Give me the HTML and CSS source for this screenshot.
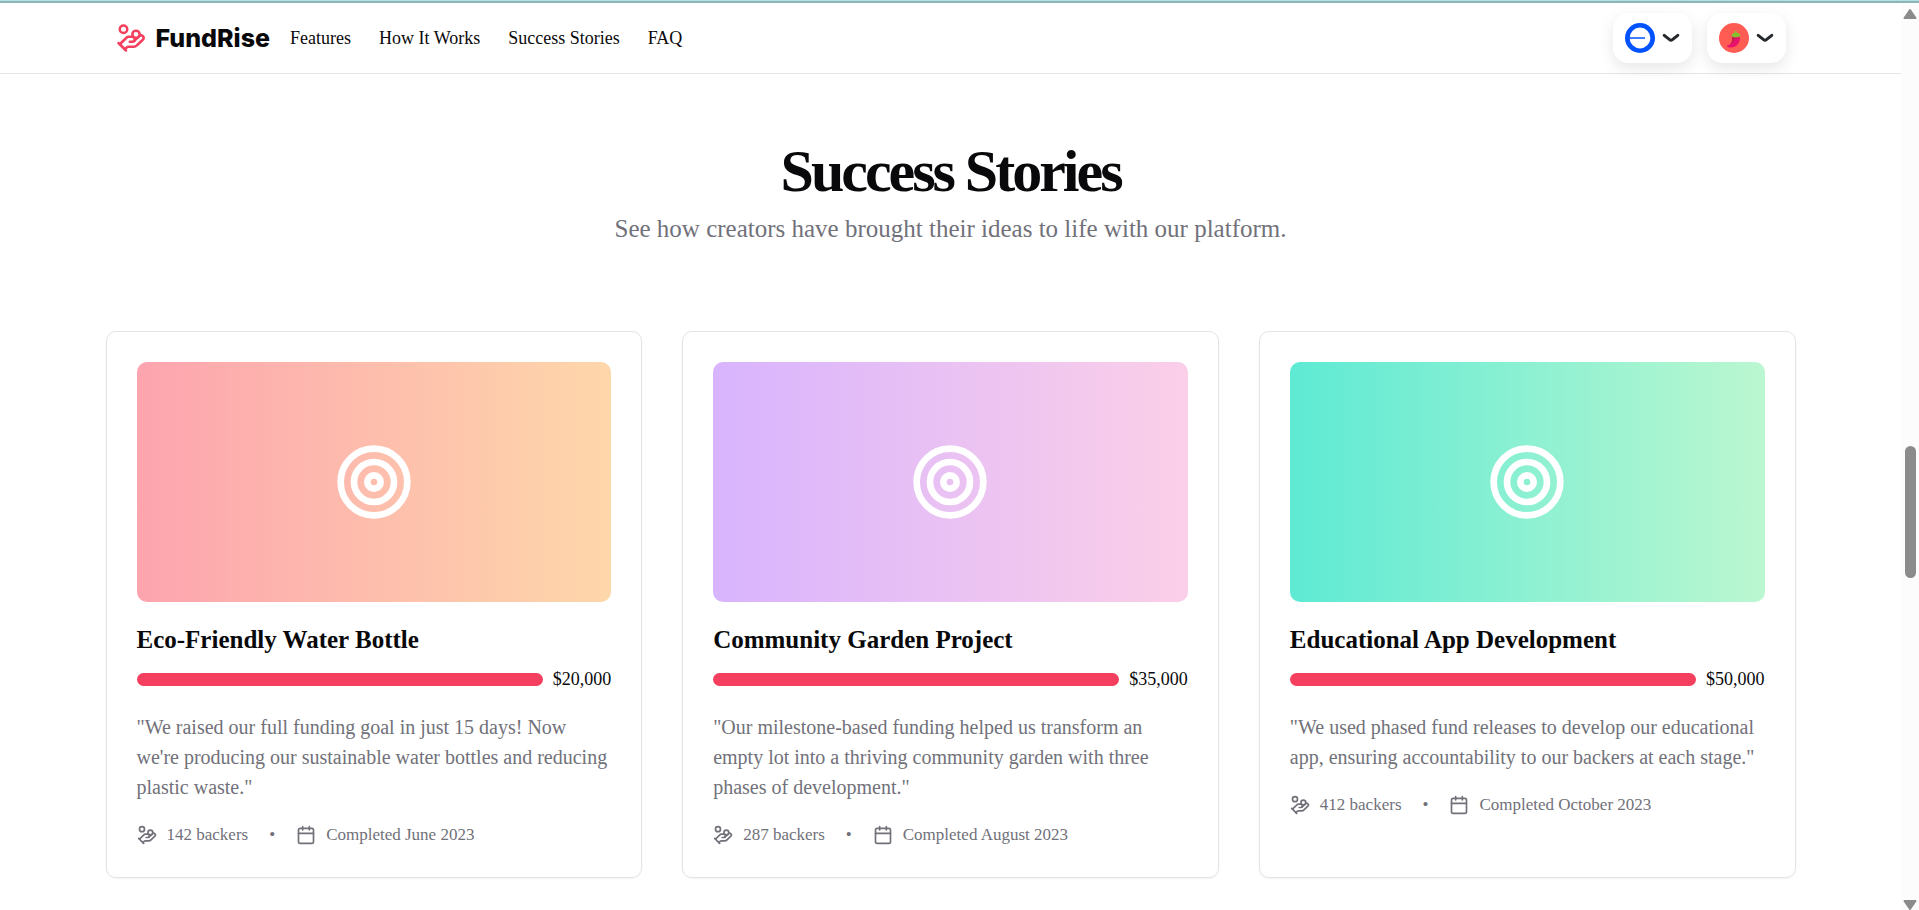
FILE: index.html
```html
<!DOCTYPE html>
<html lang="en">
<head>
<meta charset="utf-8">
<meta name="viewport" content="width=device-width, initial-scale=1">
<title>FundRise</title>
<link rel="stylesheet" href="styles.css">
</head>
<body>
<svg class="sprite" aria-hidden="true">
  <symbol id="hand-coins" viewBox="0 0 24 24">
    <path d="M11 15h2a2 2 0 1 0 0-4h-3c-.6 0-1.1.2-1.4.6L3 17"/>
    <path d="m7 21 1.6-1.4c.3-.4.8-.6 1.4-.6h4c1.1 0 2.1-.4 2.8-1.2l4.6-4.4a2 2 0 0 0-2.75-2.91l-4.2 3.9"/>
    <path d="m2 16 6 6"/>
    <circle cx="16" cy="9" r="2.9"/>
    <circle cx="6" cy="5" r="3"/>
  </symbol>
  <symbol id="calendar" viewBox="0 0 24 24">
    <path d="M8 2v4M16 2v4M3 10h18"/>
    <rect x="3" y="4" width="18" height="18" rx="2"/>
  </symbol>
  <symbol id="target" viewBox="0 0 24 24">
    <circle cx="12" cy="12" r="10"/>
    <circle cx="12" cy="12" r="6"/>
    <circle cx="12" cy="12" r="2"/>
  </symbol>
  <symbol id="chevron" viewBox="0 0 18 18">
    <path d="M2.200 6.300 7.600 10.700a2.200 2.200 0 0 0 2.800 0L15.800 6.300"/>
  </symbol>
</svg>
<div class="topline"></div>
<div class="shell">
  <div class="page">
    <header class="header">
      <div class="header-inner">
        <a class="brand" href="#"><svg class="icon brand-icon"><use href="#hand-coins"/></svg><span>FundRise</span></a>
        <nav class="nav">
          <a href="#features">Features</a>
          <a href="#how">How It Works</a>
          <a href="#stories">Success Stories</a>
          <a href="#faq">FAQ</a>
        </nav>
        <div class="wallet">
          <button class="pill" type="button" aria-label="Choose network">
            <svg class="avatar" viewBox="0 0 30 30"><circle cx="15" cy="15" r="12.700" fill="#fff" stroke="#0052ff" stroke-width="4.600"/><path d="M4 15h16" stroke="#0052ff" stroke-width="1.500"/></svg>
            <svg class="chevron"><use href="#chevron"/></svg>
          </button>
          <button class="pill" type="button" aria-label="Account">
            <svg class="avatar" viewBox="0 0 30 30"><circle cx="15" cy="15" r="15" fill="#ff5c53"/><path d="M13 13.200h7.600c.8 3.600-.3 7-2.900 9.200-2.500 2-6 2.400-8.600 1.900-1.500-.3-1.300-2 .1-2.200 3-.6 3.900-2.600 3.800-5.200z" fill="#e8126c"/><path d="M13 13.200c1 2.700.9 5.500-2.300 8 2.800-.9 5-2.700 5.100-5.200v-2.800z" fill="#bf1f52"/><path d="M12.600 13c.1-2 1.600-3.200 3.500-3.300l-.6-1.500 1.700-.5.600 2c2 .2 3.500 1.500 3.500 3.400-1.200 1.300-2.300.4-3 1.400-.9-.8-1.800-.7-2.500.1-.9-.7-2.200-.2-3.200-1.600z" fill="#86c22c"/></svg>
            <svg class="chevron"><use href="#chevron"/></svg>
          </button>
        </div>
      </div>
    </header>
    <main class="stories" id="stories">
      <div class="intro">
        <h1>Success Stories</h1>
        <p>See how creators have brought their ideas to life with our platform.</p>
      </div>
      <div class="cards">
        <article class="card">
          <div class="art art-sunrise"><svg class="icon target"><use href="#target"/></svg></div>
          <h2>Eco-Friendly Water Bottle</h2>
          <div class="funding"><div class="bar"></div><span>$20,000</span></div>
          <p class="quote">"We raised our full funding goal in just 15 days! Now we're producing our sustainable water bottles and reducing plastic waste."</p>
          <div class="meta"><span class="fact"><svg class="icon"><use href="#hand-coins"/></svg>142 backers</span><span>•</span><span class="fact"><svg class="icon"><use href="#calendar"/></svg>Completed June 2023</span></div>
        </article>
        <article class="card">
          <div class="art art-lilac"><svg class="icon target"><use href="#target"/></svg></div>
          <h2>Community Garden Project</h2>
          <div class="funding"><div class="bar"></div><span>$35,000</span></div>
          <p class="quote">"Our milestone-based funding helped us transform an empty lot into a thriving community garden with three phases of development."</p>
          <div class="meta"><span class="fact"><svg class="icon"><use href="#hand-coins"/></svg>287 backers</span><span>•</span><span class="fact"><svg class="icon"><use href="#calendar"/></svg>Completed August 2023</span></div>
        </article>
        <article class="card">
          <div class="art art-mint"><svg class="icon target"><use href="#target"/></svg></div>
          <h2>Educational App Development</h2>
          <div class="funding"><div class="bar"></div><span>$50,000</span></div>
          <p class="quote">"We used phased fund releases to develop our educational app, ensuring accountability to our backers at each stage."</p>
          <div class="meta"><span class="fact"><svg class="icon"><use href="#hand-coins"/></svg>412 backers</span><span>•</span><span class="fact"><svg class="icon"><use href="#calendar"/></svg>Completed October 2023</span></div>
        </article>
      </div>
    </main>
  </div>
  <div class="scroll" aria-hidden="true">
    <svg class="arrow" viewBox="0 0 14 10"><path d="M7 1 12.500 9h-11z"/></svg>
    <div class="track"><div class="thumb"></div></div>
    <svg class="arrow" viewBox="0 0 14 10"><path d="M7 9 12.500 1h-11z"/></svg>
  </div>
</div>
</body>
</html>
```
FILE: styles.css
```css
:root {
  --ink: #09090b;
  --muted: #71717a;
  --line: #e4e4e7;
  --rose: #f43f5e;
}

* {
  box-sizing: border-box;
}

body {
  margin: 0;
  height: 100vh;
  display: flex;
  flex-direction: column;
  overflow: hidden;
  background: #fff;
  color: var(--ink);
  font-family: "Liberation Serif", "Times New Roman", serif;
  font-size: 18px;
  line-height: 25px;
}

h1,
h2,
p {
  margin: 0;
}

.sprite {
  position: absolute;
  width: 0;
  height: 0;
}

.icon {
  flex: none;
  width: 20px;
  height: 20px;
  fill: none;
  stroke: currentColor;
  stroke-width: 2;
  stroke-linecap: round;
  stroke-linejoin: round;
}

.topline {
  flex: none;
  height: 3px;
  background: #8fb5b5;
  border-top: 1px solid #b3dfe0;
}

.shell {
  flex: 1;
  min-height: 0;
  display: flex;
}

.page {
  flex: 1;
  min-width: 0;
  overflow: hidden;
}

.header {
  padding: 10px 30px;
  border-bottom: 1px solid var(--line);
}

.header-inner {
  max-width: 1670px;
  margin: 0 auto;
  display: flex;
  align-items: center;
  gap: 20px;
}

.brand {
  display: flex;
  align-items: center;
  gap: 10px;
  color: inherit;
  text-decoration: none;
  font-family: Inter, sans-serif;
  font-size: 25px;
  font-weight: 800;
}

.brand-icon {
  width: 30px;
  height: 30px;
  color: var(--rose);
}

.nav {
  display: flex;
  gap: 28px;
}

.nav a {
  color: inherit;
  text-decoration: none;
}

.wallet {
  margin-left: auto;
  display: flex;
  gap: 15px;
}

.pill {
  display: flex;
  align-items: center;
  gap: 7px;
  height: 50px;
  padding: 0 12px;
  border: 0;
  border-radius: 15px;
  background: #fff;
  box-shadow: 0 5px 15px rgba(0, 0, 0, 0.1);
}

.avatar {
  width: 30px;
  height: 30px;
}

.chevron {
  width: 18px;
  height: 18px;
  fill: none;
  stroke: #25292e;
  stroke-width: 3;
  stroke-linecap: round;
}

.stories {
  max-width: 1750px;
  margin: 0 auto;
  padding: 67px 30px 30px;
}

.intro {
  display: flex;
  flex-direction: column;
  gap: 10px;
  text-align: center;
}

.intro h1 {
  font-size: 60px;
  line-height: 60px;
  letter-spacing: -3px;
}

.intro p {
  color: var(--muted);
  font-size: 25px;
  line-height: 35px;
}

.cards {
  display: grid;
  grid-template-columns: repeat(3, 1fr);
  gap: 40px;
  margin-top: 85px;
}

.card {
  padding: 30px;
  border: 1px solid var(--line);
  border-radius: 10px;
  box-shadow: 0 1px 2px rgba(0, 0, 0, 0.05);
}

.art {
  height: 240px;
  display: grid;
  place-items: center;
  border-radius: 10px;
  color: #fff;
}

.art-sunrise {
  background: linear-gradient(to right, #fda4af, #fed7aa);
}

.art-lilac {
  background: linear-gradient(to right, #d8b4fe, #fbcfe8);
}

.art-mint {
  background: linear-gradient(to right, #5eead4, #bbf7d0);
}

.target {
  width: 80px;
  height: 80px;
}

.card h2 {
  margin-top: 20px;
  font-size: 25px;
  line-height: 35px;
}

.funding {
  display: flex;
  align-items: center;
  gap: 10px;
  margin-top: 10px;
}

.bar {
  flex: 1;
  height: 13px;
  border-radius: 7px;
  background: var(--rose);
}

.quote {
  margin-top: 20px;
  color: var(--muted);
  font-size: 20px;
  line-height: 30px;
}

.meta {
  display: flex;
  align-items: center;
  gap: 21px;
  margin-top: 20px;
  color: var(--muted);
  font-size: 17px;
}

.fact {
  display: flex;
  align-items: center;
  gap: 10px;
}

.scroll {
  flex: none;
  width: 18px;
  display: flex;
  flex-direction: column;
  align-items: center;
  padding-top: 6px;
  background: #fcfcfc;
}

.arrow {
  flex: none;
  width: 14px;
  height: 10px;
  fill: #8b8b8b;
  stroke: #8b8b8b;
  stroke-width: 2;
  stroke-linejoin: round;
}

.track {
  flex: 1;
  display: grid;
  grid-template-rows: 427fr 132fr 322fr;
}

.thumb {
  grid-row: 2;
  width: 11px;
  border-radius: 6px;
  background: #8b8b8b;
}
```
